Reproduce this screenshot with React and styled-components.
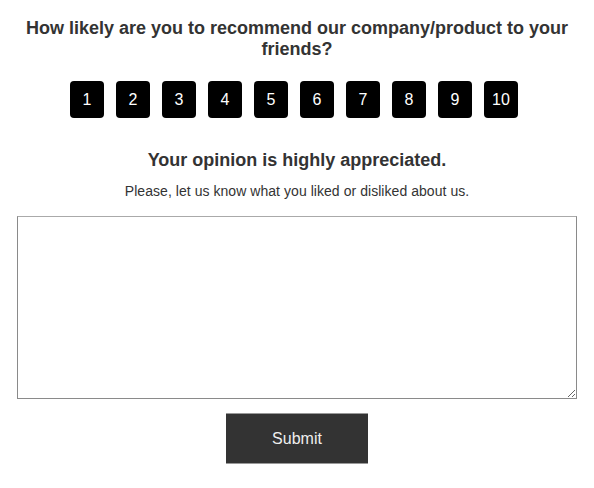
import styled, { createGlobalStyle } from 'styled-components'

const Global = createGlobalStyle`
  body {
    margin: 0;
    background: #fff;
    font-family: "Liberation Sans", Arial, sans-serif;
  }
`

const Survey = styled.div`
  width: 560px;
  margin: 0 auto;
  padding-top: 18px;
  display: flex;
  flex-direction: column;
  align-items: center;
  color: #333;
`

const Question = styled.h2`
  margin: 0;
  font-size: 18px;
  line-height: 21px;
  font-weight: bold;
  text-align: center;
  color: #333;
`

const Scale = styled.div`
  display: flex;
  justify-content: center;
  gap: 12px;
  margin-top: 21px;
  padding-right: 6px;
`

const ScoreButton = styled.button`
  width: 34px;
  height: 37px;
  border: none;
  border-radius: 4px;
  background: #000;
  color: #fff;
  font-family: "Liberation Sans", Arial, sans-serif;
  font-size: 16px;
  padding: 0;
  cursor: pointer;
`

const Heading = styled.h3`
  margin: 32px 0 0;
  font-size: 18px;
  line-height: 21px;
  font-weight: bold;
  color: #333;
`

const Note = styled.p`
  margin: 12px 0 0;
  font-size: 14px;
  line-height: 16px;
  letter-spacing: 0.05px;
  color: #333;
`

const Feedback = styled.textarea`
  box-sizing: border-box;
  width: 560px;
  height: 183px;
  margin-top: 17px;
  border: 1px solid #8a8a8a;
  border-top-color: #aaa;
  padding: 4px;
  font-family: "Liberation Sans", Arial, sans-serif;
  font-size: 14px;
  display: block;
`

const Submit = styled.button`
  margin-top: 14px;
  width: 142px;
  height: 51px;
  background: #333;
  color: #eee;
  border: none;
  border-top: 1px solid #999;
  border-bottom: 1px solid #999;
  font-family: "Liberation Sans", Arial, sans-serif;
  font-size: 16px;
  cursor: pointer;
`

export default function App() {
  const scores = [1, 2, 3, 4, 5, 6, 7, 8, 9, 10]
  return (
    <>
      <Global />
      <Survey>
        <Question>How likely are you to recommend our company/product to your friends?</Question>
        <Scale>
          {scores.map(n => (
            <ScoreButton key={n}>{n}</ScoreButton>
          ))}
        </Scale>
        <Heading>Your opinion is highly appreciated.</Heading>
        <Note>Please, let us know what you liked or disliked about us.</Note>
        <Feedback />
        <Submit>Submit</Submit>
      </Survey>
    </>
  )
}
